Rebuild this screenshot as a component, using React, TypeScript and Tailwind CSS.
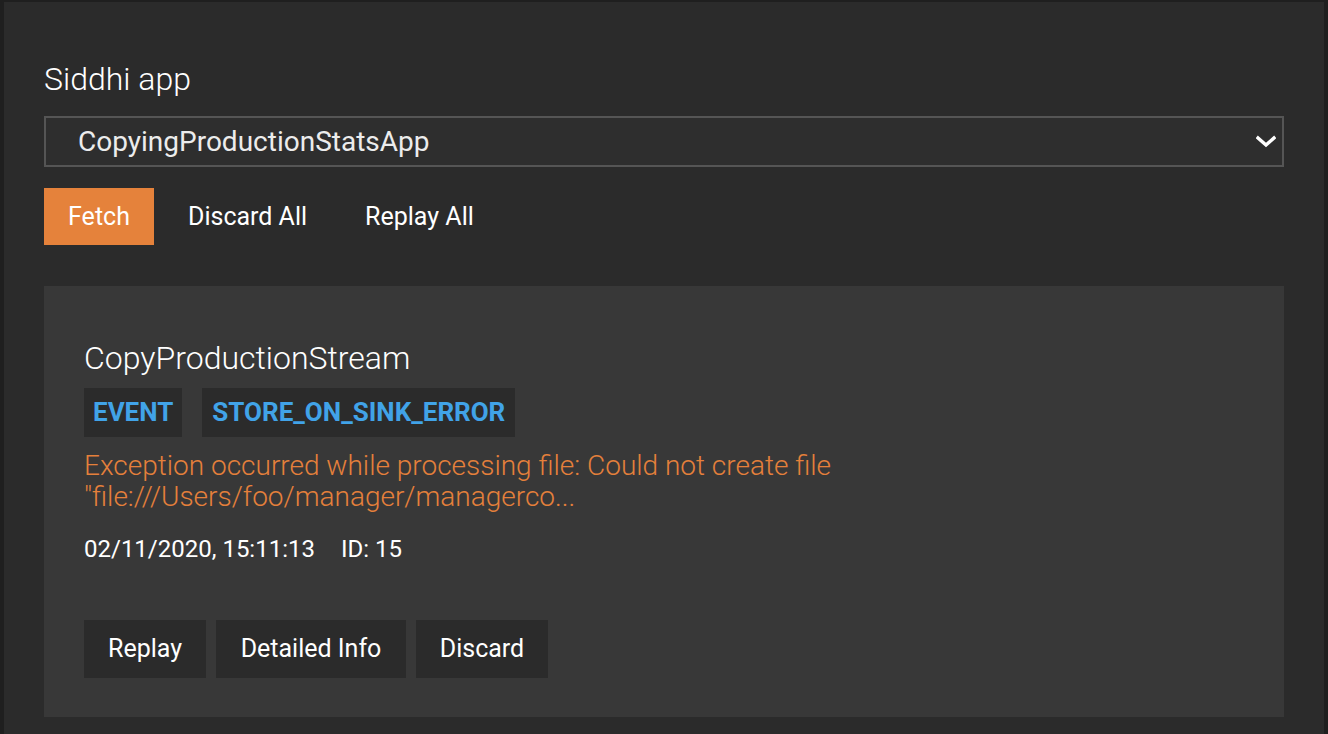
import React from 'react';

const font = { fontFamily: 'Roboto, "Noto Sans", sans-serif' };

export default function App() {
  return (
    <div className="w-[1328px] h-[734px] overflow-hidden bg-[#1f1f1f] pt-[2px] px-[4px]" style={font}>
      <div className="h-full bg-[#2b2b2b] px-[40px] pt-[56px]">
        <div className="text-[32px] leading-[42px] font-light text-white">Siddhi app</div>
        <div className="mt-[16px] h-[51px] border-2 border-[#555555] bg-[#2e2e2e] flex items-center justify-between pl-[32px] pr-[6px]">
          <span className="text-[28px] text-[#ececec]">CopyingProductionStatsApp</span>
          <svg width="20" height="14" viewBox="0 0 20 14">
            <path d="M2 3 L10 10 L18 3" stroke="#ffffff" strokeWidth="3.5" fill="none" strokeLinecap="square" />
          </svg>
        </div>
        <div className="mt-[21px] flex items-center">
          <button className="h-[57px] w-[110px] bg-[#e5823b] text-white text-[25px]">Fetch</button>
          <button className="h-[57px] px-[34px] text-white text-[25px]">Discard All</button>
          <button className="h-[57px] px-[24px] text-white text-[25px]">Replay All</button>
        </div>
        <div className="mt-[41px] h-[431px] bg-[#383838] px-[40px] pt-[52px]">
          <div className="text-[32px] leading-[40px] font-light text-white">CopyProductionStream</div>
          <div className="mt-[10px] flex gap-[20px]">
            <span className="h-[49px] px-[9px] bg-[#2b2b2b] text-[#41a3e8] text-[26px] font-bold flex items-center">EVENT</span>
            <span className="h-[49px] px-[10px] bg-[#2b2b2b] text-[#41a3e8] text-[26px] font-bold flex items-center">STORE_ON_SINK_ERROR</span>
          </div>
          <div className="mt-[13px] text-[28px] leading-[31px] font-light text-[#e5803b] max-w-[880px]">
            Exception occurred while processing file: Could not create file "file:///Users/foo/manager/managerco...
          </div>
          <div className="mt-[21px] text-[24px] leading-[32px] text-white">
            02/11/2020, 15:11:13<span className="inline-block w-[26px]"></span>ID: 15
          </div>
          <div className="mt-[55px] flex gap-[10px]">
            <button className="h-[58px] w-[122px] bg-[#2b2b2b] text-white text-[25px]">Replay</button>
            <button className="h-[58px] w-[190px] bg-[#2b2b2b] text-white text-[25px]">Detailed Info</button>
            <button className="h-[58px] w-[132px] bg-[#2b2b2b] text-white text-[25px]">Discard</button>
          </div>
        </div>
      </div>
    </div>
  );
}
